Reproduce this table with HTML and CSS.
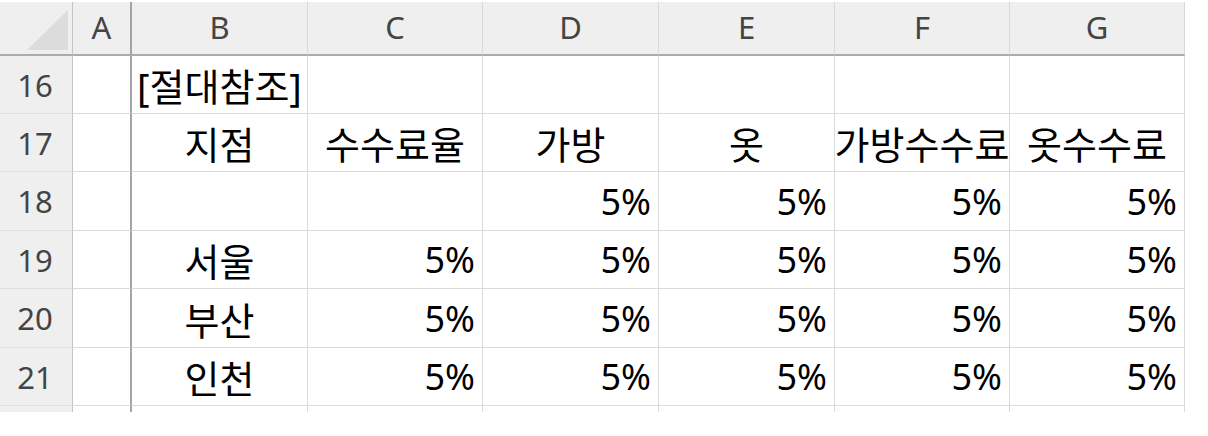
FILE: index.html
```html
<!DOCTYPE html>
<html lang="ko">
<head>
<meta charset="utf-8">
<link rel="stylesheet" href="styles.css">
</head>
<body>
<div class="sheet">
  <div class="corner"><span class="tri"></span></div>
  <div class="colhead sep">A</div>
  <div class="colhead">B</div>
  <div class="colhead">C</div>
  <div class="colhead">D</div>
  <div class="colhead">E</div>
  <div class="colhead">F</div>
  <div class="colhead">G</div>

  <div class="rowhead">16</div>
  <div class="cell sep"></div>
  <div class="cell left">[절대참조]</div>
  <div class="cell"></div>
  <div class="cell"></div>
  <div class="cell"></div>
  <div class="cell"></div>
  <div class="cell"></div>

  <div class="rowhead">17</div>
  <div class="cell sep"></div>
  <div class="cell center">지점</div>
  <div class="cell center">수수료율</div>
  <div class="cell center">가방</div>
  <div class="cell center">옷</div>
  <div class="cell center">가방수수료</div>
  <div class="cell center">옷수수료</div>

  <div class="rowhead">18</div>
  <div class="cell sep"></div>
  <div class="cell"></div>
  <div class="cell"></div>
  <div class="cell num">5%</div>
  <div class="cell num">5%</div>
  <div class="cell num">5%</div>
  <div class="cell num">5%</div>

  <div class="rowhead">19</div>
  <div class="cell sep"></div>
  <div class="cell center">서울</div>
  <div class="cell num">5%</div>
  <div class="cell num">5%</div>
  <div class="cell num">5%</div>
  <div class="cell num">5%</div>
  <div class="cell num">5%</div>

  <div class="rowhead">20</div>
  <div class="cell sep"></div>
  <div class="cell center">부산</div>
  <div class="cell num">5%</div>
  <div class="cell num">5%</div>
  <div class="cell num">5%</div>
  <div class="cell num">5%</div>
  <div class="cell num">5%</div>

  <div class="rowhead">21</div>
  <div class="cell sep"></div>
  <div class="cell center">인천</div>
  <div class="cell num">5%</div>
  <div class="cell num">5%</div>
  <div class="cell num">5%</div>
  <div class="cell num">5%</div>
  <div class="cell num">5%</div>

  <div class="rowhead stub"></div>
  <div class="cell sep stub"></div>
  <div class="cell stub"></div>
  <div class="cell stub"></div>
  <div class="cell stub"></div>
  <div class="cell stub"></div>
  <div class="cell stub"></div>
  <div class="cell stub"></div>
</div>
</body>
</html>
```

FILE: styles.css
```css
html, body {
  margin: 0;
  padding: 0;
  background: #ffffff;
}

.sheet {
  display: grid;
  grid-template-columns: 73px 59px 176px 175px 176px 176px 175px 175px;
  grid-template-rows: 54px 58px 58px 59px 58px 59px 58px 6px;
  width: 1185px;
  margin-top: 2px;
  font-family: "Noto Sans", "Noto Sans CJK KR", sans-serif;
}

.sheet > div {
  box-sizing: border-box;
  min-width: 0;
}

.corner {
  background: #efefef;
  border-right: 1px solid #c4c4c4;
  border-bottom: 2px solid #ababab;
  position: relative;
}

.tri {
  position: absolute;
  left: 27px;
  top: 8px;
  width: 0;
  height: 0;
  border-left: 41px solid transparent;
  border-bottom: 40px solid #dcdcdc;
}

.colhead {
  background: #efefef;
  border-right: 1px solid #d8d8d8;
  border-bottom: 2px solid #ababab;
  color: #444444;
  font-size: 31px;
  display: flex;
  align-items: center;
  justify-content: center;
  padding-bottom: 2px;
}

.rowhead {
  background: #efefef;
  border-right: 1px solid #c4c4c4;
  border-bottom: 1px solid #dedede;
  color: #444444;
  font-size: 31px;
  display: flex;
  align-items: center;
  justify-content: center;
  padding-right: 2px;
}

.cell {
  border-right: 1px solid #dadada;
  border-bottom: 1px solid #dadada;
  color: #000000;
  font-size: 36px;
  white-space: nowrap;
  display: flex;
  align-items: center;
}

.sheet > .sep {
  border-right: 2px solid #a4a4a4;
}

.left {
  justify-content: flex-start;
  padding-left: 5px;
  font-size: 38px;
}

.center {
  justify-content: center;
  font-size: 38px;
}

.num {
  justify-content: flex-end;
  padding-right: 7px;
}

.stub {
  border-bottom: none;
}
```
